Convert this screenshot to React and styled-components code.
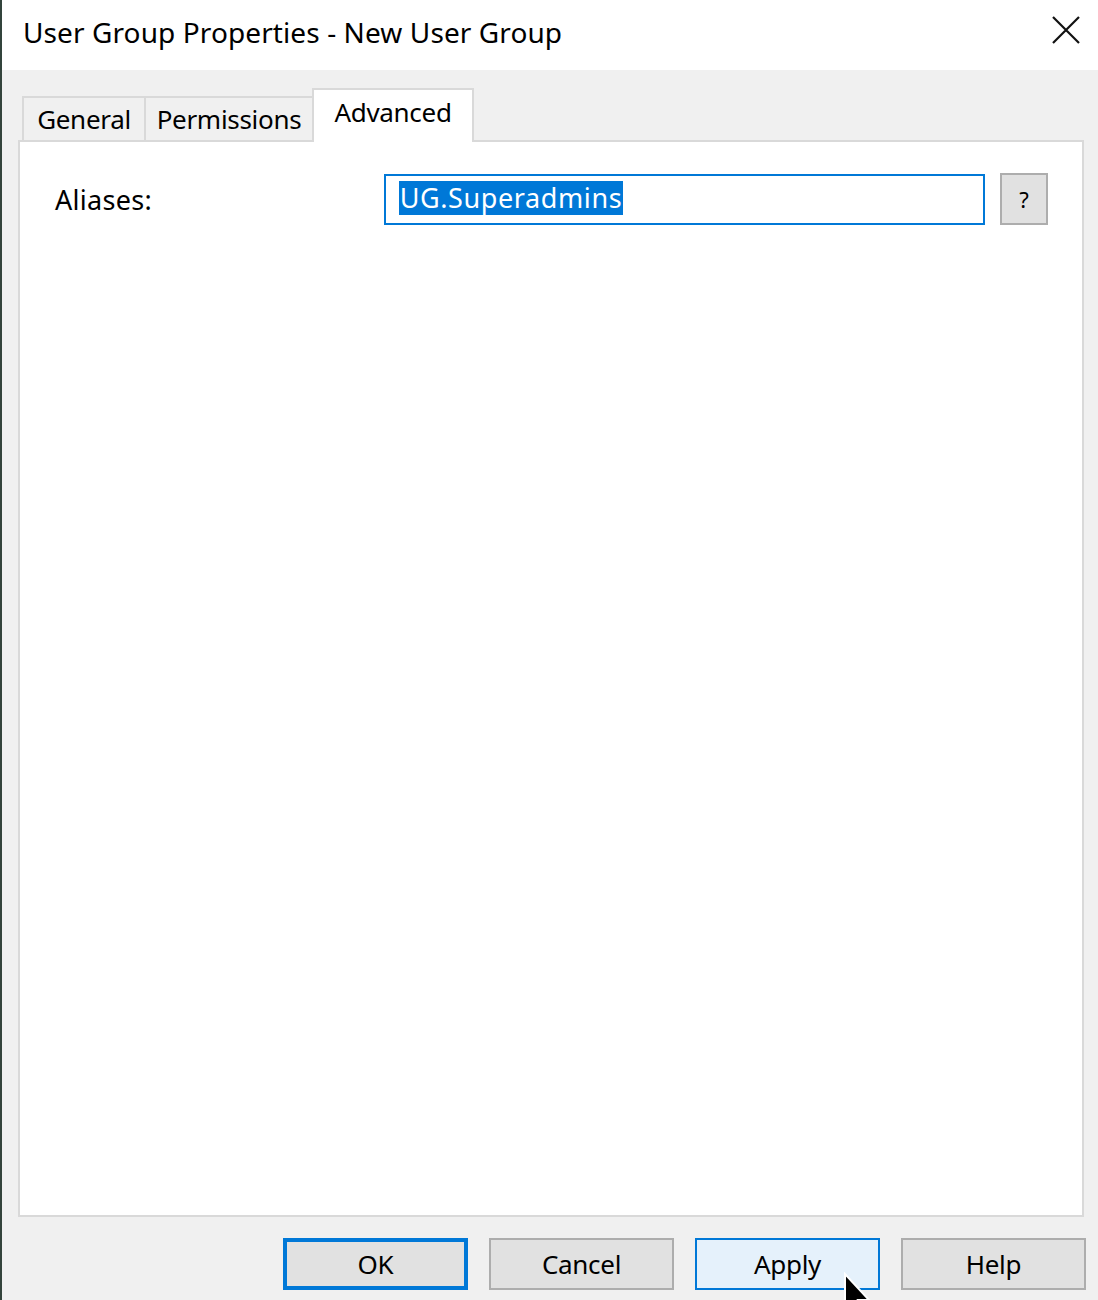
import React from "react";
import styled, { createGlobalStyle } from "styled-components";

const Global = createGlobalStyle`
  html, body { margin: 0; padding: 0; background: #f0f0f0; }
  body { font-family: "Noto Sans", "Open Sans", sans-serif; }
  * { box-sizing: border-box; }
`;

const Window = styled.div`
  position: relative;
  width: 1098px;
  height: 1300px;
  display: flex;
  flex-direction: column;
  border-left: 2px solid #33443c;
  overflow: hidden;
  background: #f0f0f0;
`;

const TitleBar = styled.div`
  height: 70px;
  flex: none;
  background: #ffffff;
  display: flex;
  align-items: center;
  justify-content: space-between;
  padding: 0 16px 0 21px;
`;

const Title = styled.div`
  font-size: 28px;
  color: #000;
  letter-spacing: 0.1px;
  margin-top: -6px;
`;

const CloseBtn = styled.div`
  width: 32px;
  height: 32px;
  display: flex;
  align-items: center;
  justify-content: center;
  margin-top: -10px;
`;

const Body = styled.div`
  flex: 1;
  display: flex;
  flex-direction: column;
  padding: 18px 14px 10px 16px;
`;

const TabRow = styled.div`
  display: flex;
  align-items: flex-end;
  height: 54px;
  padding-left: 4px;
  position: relative;
  z-index: 2;
  margin-bottom: -2px;
`;

const Tab = styled.div`
  width: ${(p) => p.$w}px;
  height: ${(p) => (p.$active ? 54 : 46)}px;
  background: ${(p) => (p.$active ? "#ffffff" : "#f0f0f0")};
  border: 2px solid #d9d9d9;
  border-bottom: ${(p) => (p.$active ? "none" : "2px solid #d9d9d9")};
  border-left: ${(p) => (p.$first || p.$active ? "2px solid #d9d9d9" : "none")};
  margin-left: ${(p) => (p.$active ? "-2px" : "0")};
  display: flex;
  align-items: ${(p) => (p.$active ? "flex-start" : "center")};
  justify-content: center;
  padding-top: ${(p) => (p.$active ? "4px" : "0")};
  font-size: 26px;
  color: #000;
  letter-spacing: -0.3px;
`;

const Panel = styled.div`
  flex: 1;
  background: #ffffff;
  border: 2px solid #d9d9d9;
  padding: 31px 34px 0 35px;
  position: relative;
  z-index: 1;
`;

const FieldRow = styled.div`
  display: flex;
  align-items: center;
`;

const Label = styled.div`
  width: 329px;
  font-size: 27px;
  color: #000;
  letter-spacing: 0.3px;
`;

const TextBox = styled.div`
  width: 602px;
  height: 51px;
  border: 2px solid #0078d7;
  background: #fff;
  display: flex;
  align-items: center;
  padding-left: 13px;
`;

const Selected = styled.span`
  background: #0078d7;
  color: #ffffff;
  font-size: 27px;
  line-height: 34px;
  padding: 0 1px;
  letter-spacing: 0.6px;
  margin-top: -3px;
`;

const HelpBtn = styled.div`
  width: 48px;
  height: 52px;
  margin-left: 15px;
  background: #e1e1e1;
  border: 2px solid #adadad;
  display: flex;
  align-items: center;
  justify-content: center;
  font-size: 22px;
  color: #000;
`;

const Footer = styled.div`
  display: flex;
  justify-content: flex-end;
  gap: 21px;
  padding-top: 21px;
  margin-right: -2px;
`;

const Button = styled.div`
  width: 185px;
  height: 52px;
  background: ${(p) => (p.$hover ? "#e5f1fb" : "#e1e1e1")};
  border: ${(p) =>
    p.$default ? "4px solid #0078d7" : p.$hover ? "2px solid #0078d7" : "2px solid #adadad"};
  display: flex;
  align-items: center;
  justify-content: center;
  font-size: 26px;
  color: #000;
  letter-spacing: -0.3px;
`;

const Cursor = styled.svg`
  position: absolute;
  left: 841px;
  top: 1272px;
  pointer-events: none;
`;

export default function App() {
  return (
    <>
      <Global />
      <Window>
        <TitleBar>
          <Title>User Group Properties - New User Group</Title>
          <CloseBtn>
            <svg width="28" height="28" viewBox="0 0 28 28">
              <path d="M1 1 L27 27 M27 1 L1 27" stroke="#111" strokeWidth="2.2" fill="none" />
            </svg>
          </CloseBtn>
        </TitleBar>
        <Body>
          <TabRow>
            <Tab $w={124} $first>General</Tab>
            <Tab $w={168}>Permissions</Tab>
            <Tab $w={162} $active>Advanced</Tab>
          </TabRow>
          <Panel>
            <FieldRow>
              <Label>Aliases:</Label>
              <TextBox>
                <Selected>UG.Superadmins</Selected>
              </TextBox>
              <HelpBtn>?</HelpBtn>
            </FieldRow>
          </Panel>
          <Footer>
            <Button $default>OK</Button>
            <Button>Cancel</Button>
            <Button $hover>Apply</Button>
            <Button>Help</Button>
          </Footer>
        </Body>
        <Cursor width="30" height="44" viewBox="0 0 30 44">
          <path d="M2 2 L2 38 L10 30 L16 43 L21 41 L15 28 L26 28 Z" fill="#000" stroke="#fff" strokeWidth="2" strokeLinejoin="miter" />
        </Cursor>
      </Window>
    </>
  );
}
